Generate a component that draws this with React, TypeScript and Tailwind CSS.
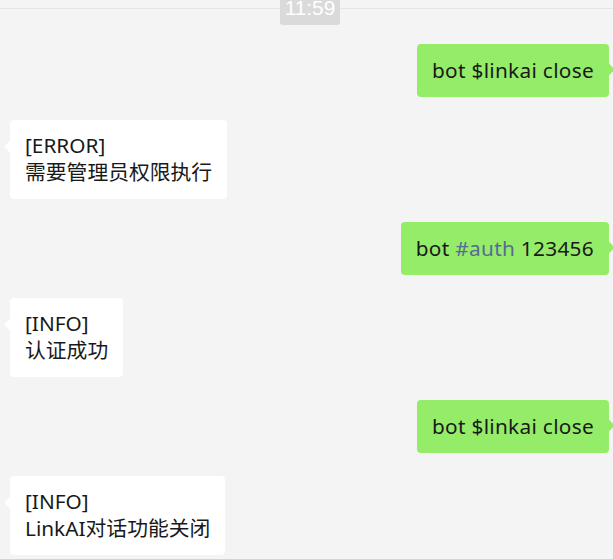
import React from "react";

type Msg =
    | { side: "right"; parts: { text: string; link?: boolean }[] }
    | { side: "left"; lines: string[] };

const messages: Msg[] = [
    { side: "right", parts: [{ text: "bot $linkai close" }] },
    { side: "left", lines: ["[ERROR]", "需要管理员权限执行"] },
    { side: "right", parts: [{ text: "bot " }, { text: "#auth", link: true }, { text: " 123456" }] },
    { side: "left", lines: ["[INFO]", "认证成功"] },
    { side: "right", parts: [{ text: "bot $linkai close" }] },
    { side: "left", lines: ["[INFO]", "LinkAI对话功能关闭"] },
];

const App: React.FC = () => {
    return (
        <div
            className="w-[613px] h-[559px] overflow-hidden bg-[#f4f4f4] text-[#191919]"
            style={{ fontFamily: '"Noto Sans", "Noto Sans CJK SC", sans-serif' }}
        >
            {/* topo com o horário */}
            <div className="relative h-[44px]">
                <div className="h-[9px] border-b border-[#e5e5e5]" />
                <div className="absolute left-[280px] top-0 w-[60px] h-[25px] rounded-b-[3px] bg-[#dadada] overflow-hidden">
                    <p className="text-center text-white text-[20.8px] leading-[20.8px] -mt-[2px] font-['Liberation_Sans',sans-serif]">
                        11:59
                    </p>
                </div>
            </div>

            <div className="flex flex-col gap-[23px]">
                {messages.map((msg, index) => {
                    if (msg.side === "right") {
                        return (
                            <div key={index} className="flex justify-end pr-[4px]">
                                <div className="relative rounded-[4px] bg-[#95ec69] px-[15px] py-[13px] text-[20.8px] leading-[27px] tracking-[0.3px] whitespace-nowrap">
                                    {msg.parts.map((p, i) => (
                                        <span key={i} className={p.link ? "text-[#576b95]" : ""}>
                                            {p.text}
                                        </span>
                                    ))}
                                    <span className="absolute -right-[4px] top-[21px] w-[9px] h-[9px] rotate-45 rounded-[1px] bg-[#95ec69]" />
                                </div>
                            </div>
                        );
                    }
                    return (
                        <div key={index} className="flex justify-start pl-[10px]">
                            <div className="relative rounded-[4px] bg-white px-[15px] pt-[12px] pb-[13px] text-[20.8px] leading-[27px]">
                                {msg.lines.map((l, i) => (
                                    <p key={i} className="whitespace-nowrap">{l}</p>
                                ))}
                                <span className="absolute -left-[4px] top-[22px] w-[9px] h-[9px] rotate-45 rounded-[1px] bg-white" />
                            </div>
                        </div>
                    );
                })}
            </div>
        </div>
    );
};

export default App;
